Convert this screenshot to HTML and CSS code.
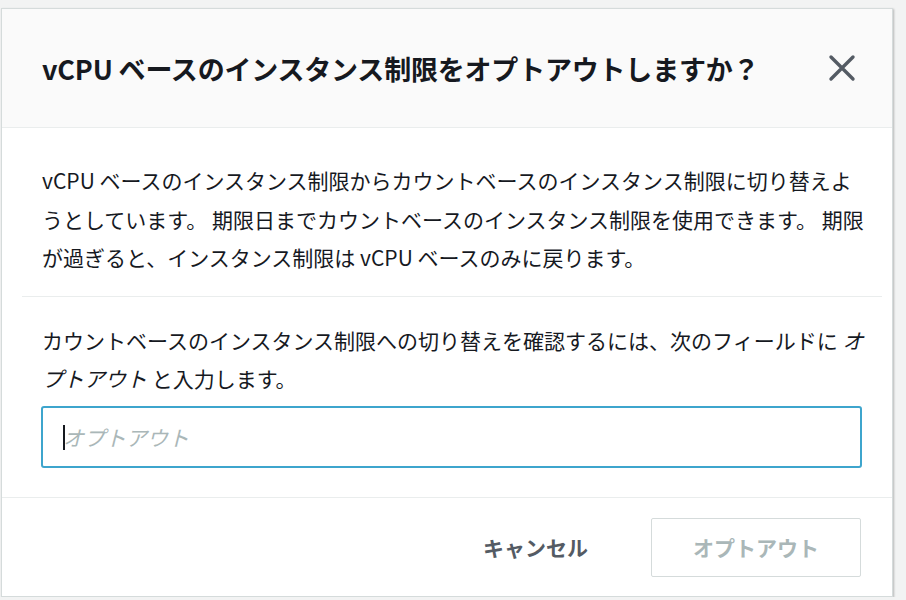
FILE: index.html
```html
<!DOCTYPE html>
<html lang="ja">
<head>
    <meta charset="UTF-8">
    <meta name="viewport" content="width=device-width, initial-scale=1.0">
    <title>オプトアウト</title>
    <link rel="stylesheet" href="styles.css">
</head>
<body>
    <div class="modal">
        <div class="modal-header">
            <h2>vCPU ベースのインスタンス制限をオプトアウトしますか？</h2>
            <button class="close-button" aria-label="閉じる">
                <svg width="28" height="28" viewBox="0 0 28 28">
                    <path d="M3 3 L25 25 M25 3 L3 25" stroke="#545b64" stroke-width="3.4" stroke-linecap="round" fill="none"/>
                </svg>
            </button>
        </div>

        <div class="modal-body">
            <div class="section">
                <p>vCPU ベースのインスタンス制限からカウントベースのインスタンス制限に切り替えようとしています。 期限日までカウントベースのインスタンス制限を使用できます。 期限が過ぎると、インスタンス制限は vCPU ベースのみに戻ります。</p>
            </div>
            <div class="section confirm">
                <p>カウントベースのインスタンス制限への切り替えを確認するには、次のフィールドに <em>オプトアウト</em> と入力します。</p>
                <div class="input-wrap">
                    <input type="text" class="confirm-input" placeholder="オプトアウト" autofocus>
                </div>
            </div>
        </div>

        <div class="modal-footer">
            <button class="link-button">キャンセル</button>
            <button class="primary-button" disabled>オプトアウト</button>
        </div>
    </div>
</body>
</html>
```

FILE: styles.css
```css
:root {
    --text-color: #16191f;
    --muted-color: #545b64;
    --disabled-color: #aab7b8;
    --border-color: #eaeded;
    --focus-color: #3ea5cd;
}

body {
    margin: 0;
    background-color: #f2f3f3;
    font-family: "Noto Sans CJK JP", "Noto Sans", sans-serif;
    color: var(--text-color);
}

.modal {
    margin: 8px 0 0 1px;
    width: 890px;
    height: 587px;
    background-color: #fff;
    border: 1px solid #d5dbdb;
    box-shadow: 1px 1px 2px rgba(0, 0, 0, 0.25);
    display: flex;
    flex-direction: column;
}

.modal-header {
    height: 118px;
    display: flex;
    align-items: center;
    justify-content: space-between;
    padding: 0 36px 0 40px;
    background-color: #fafafa;
    border-bottom: 1px solid var(--border-color);
}

.modal-header h2 {
    margin: 0;
    font-size: 27px;
    font-weight: 700;
    letter-spacing: -0.2px;
}

.close-button {
    background: none;
    border: none;
    padding: 0;
    width: 28px;
    height: 28px;
    cursor: pointer;
}

.modal-body {
    padding: 0 10px 0 20px;
    flex: 1;
}

.section {
    padding: 0 12px 0 20px;
    font-size: 21px;
    line-height: 38.5px;
}

.section p {
    margin: 0;
}

.section:first-child {
    padding-top: 33px;
    padding-bottom: 19px;
    border-bottom: 1px solid var(--border-color);
}

.confirm {
    padding-top: 24px;
}

.confirm em {
    font-style: italic;
}

.input-wrap {
    position: relative;
    margin: 8px 8px 0 -1px;
}

/* caret of the focused field */
.input-wrap::after {
    content: "";
    position: absolute;
    left: 22px;
    top: 19px;
    width: 2px;
    height: 25px;
    background-color: var(--text-color);
}

.confirm-input {
    display: block;
    box-sizing: border-box;
    width: 100%;
    height: 62px;
    padding: 0 20px;
    border: 2px solid var(--focus-color);
    border-radius: 3px;
    outline: none;
    font-family: inherit;
    font-size: 21px;
    color: var(--text-color);
    caret-color: transparent;
}

.confirm-input::placeholder {
    color: var(--disabled-color);
    font-style: italic;
}

.modal-footer {
    height: 98px;
    display: flex;
    align-items: center;
    justify-content: flex-end;
    gap: 63px;
    padding-right: 31px;
    border-top: 1px solid var(--border-color);
}

.link-button,
.primary-button {
    font-family: inherit;
    font-size: 21px;
    font-weight: 700;
    background: none;
    cursor: pointer;
}

.link-button {
    border: none;
    padding: 0;
    color: var(--muted-color);
}

.primary-button {
    width: 210px;
    height: 59px;
    border: 1px solid #d5dbdb;
    border-radius: 2px;
    color: var(--disabled-color);
    background-color: #fff;
    cursor: default;
}
```
